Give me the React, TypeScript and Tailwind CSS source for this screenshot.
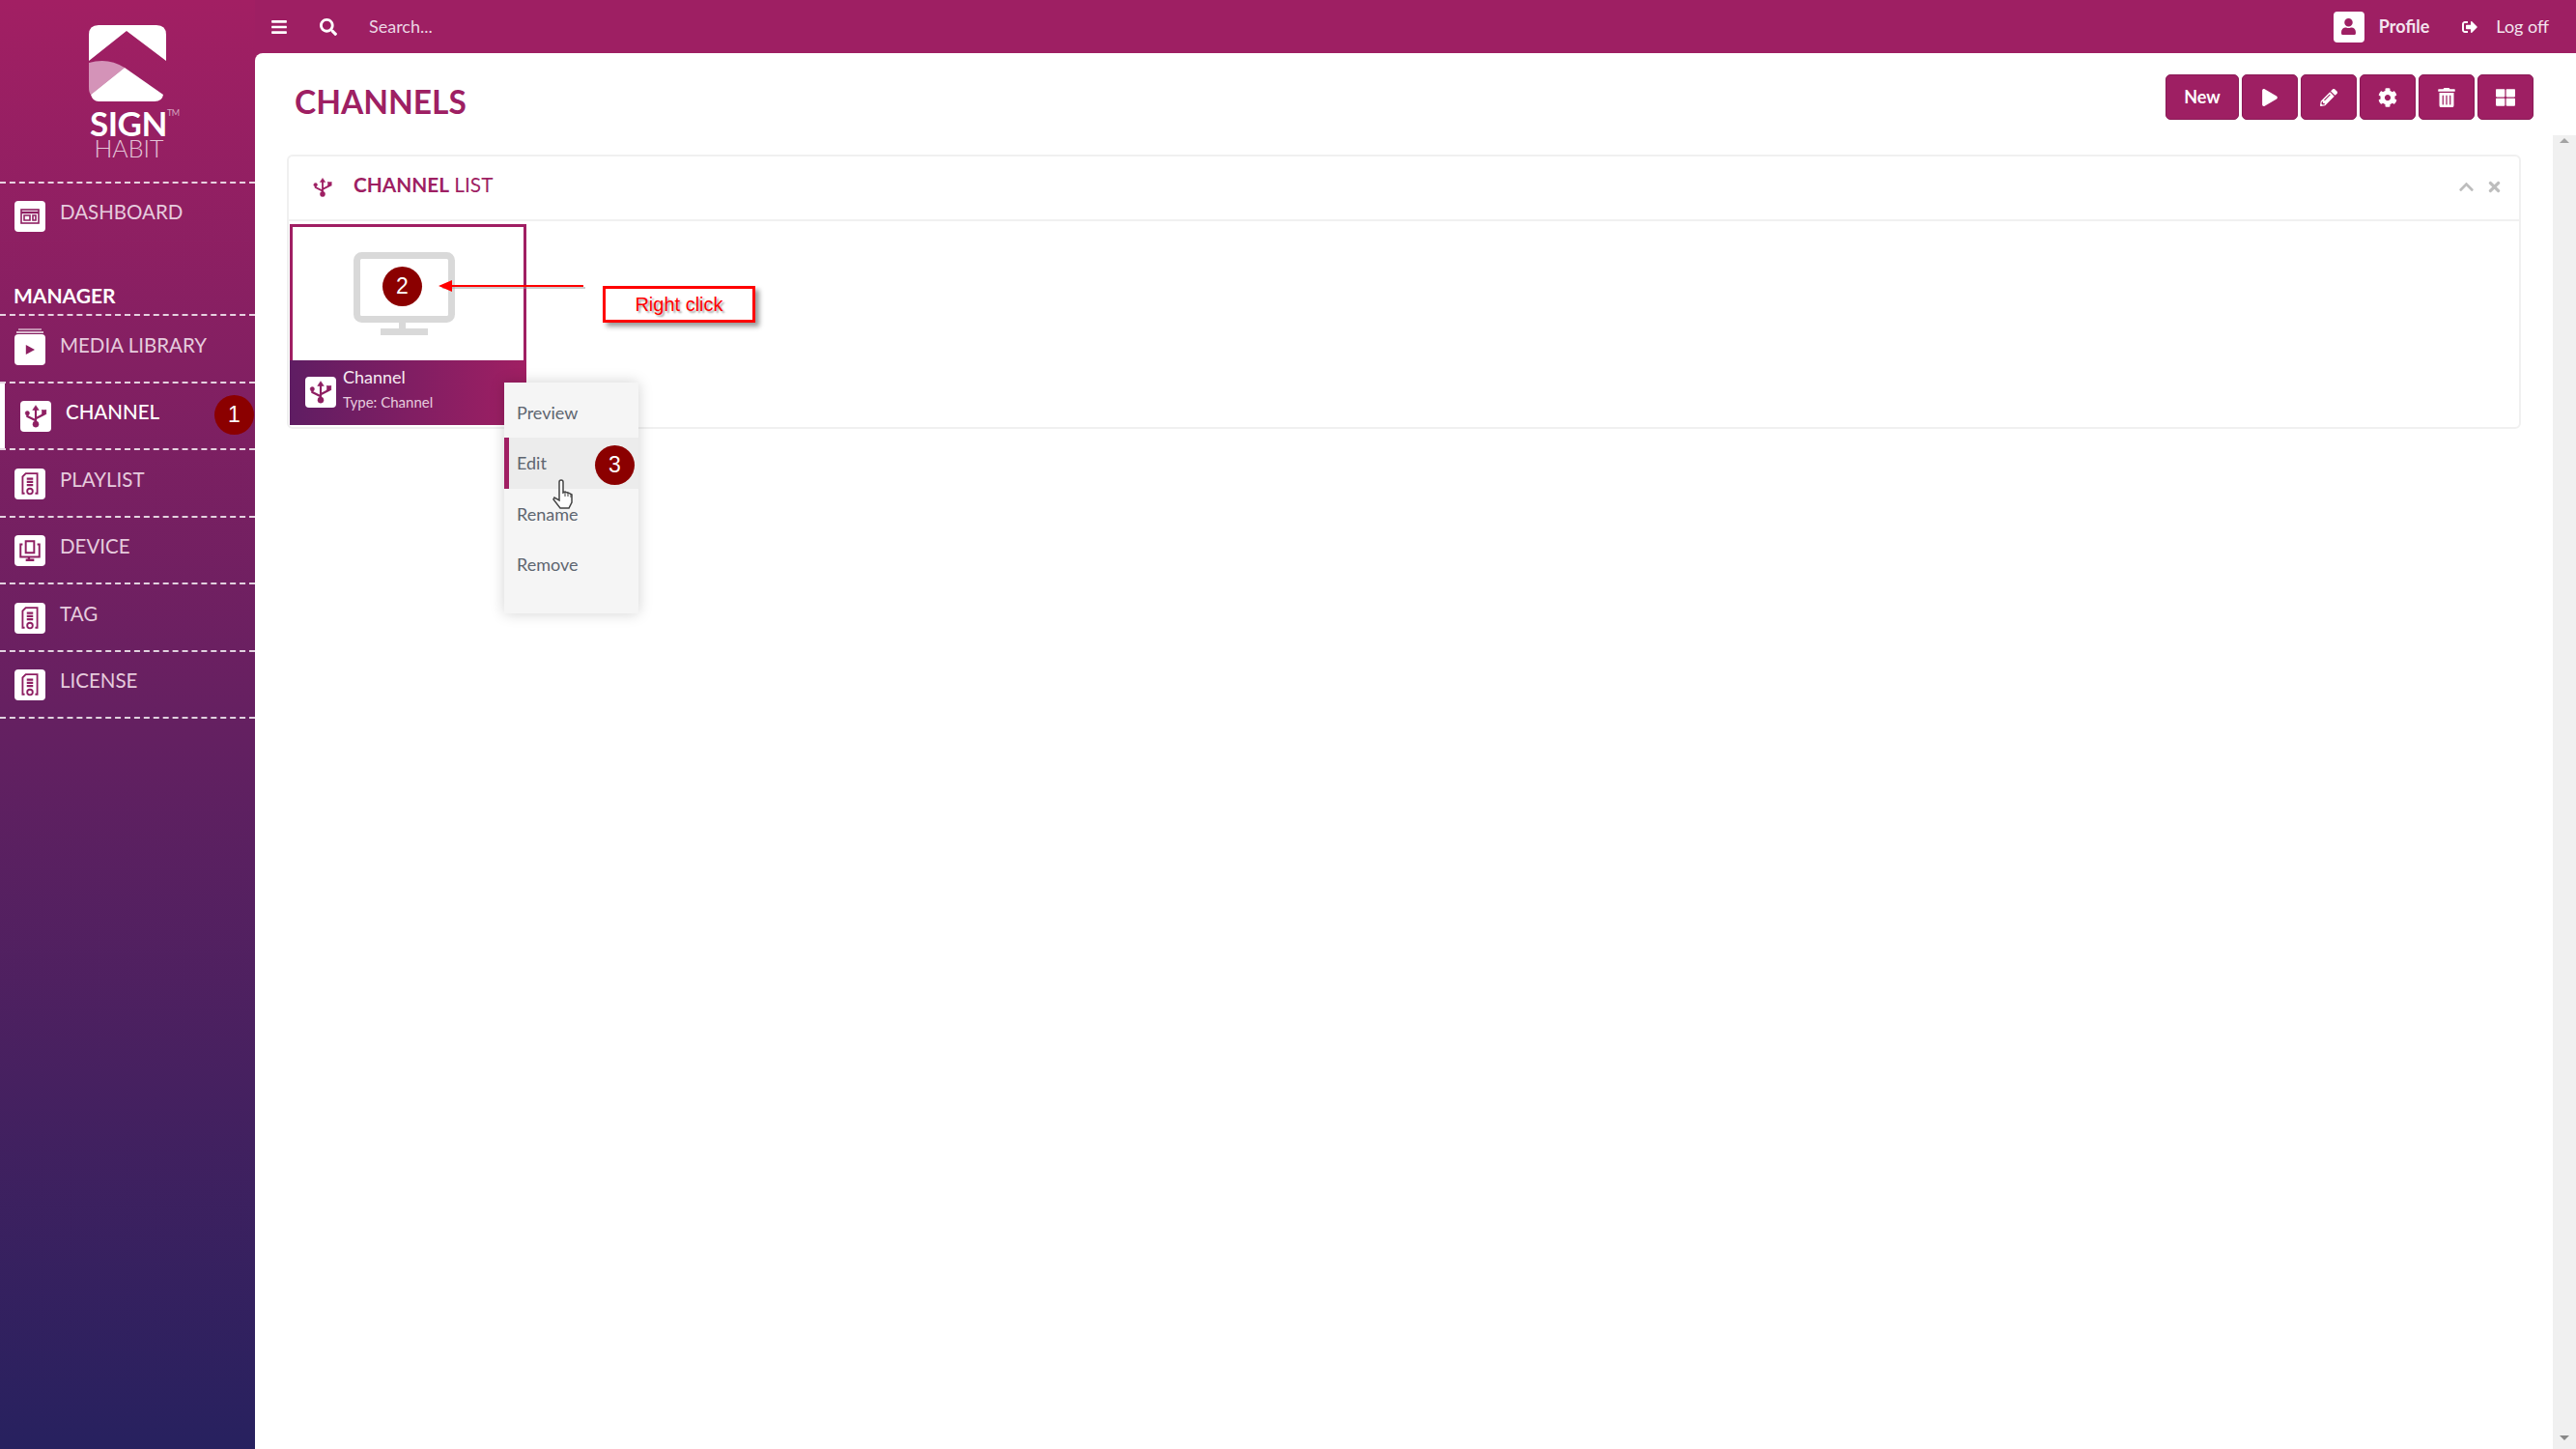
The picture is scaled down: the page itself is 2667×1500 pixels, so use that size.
import React from 'react';
import { FaBars, FaSearch, FaPlay, FaPencilAlt, FaCog, FaTrashAlt, FaThLarge, FaChevronUp, FaTimes, FaUser, FaSignOutAlt } from 'react-icons/fa';

const SheetIcon = () => (
  <svg viewBox="0 0 24 24" className="w-[26px] h-[26px]" fill="none" stroke="#8e1f62" strokeWidth="1.7">
    <path d="M7 21H5V5l3-3h11v19h-2" />
    <path d="M9 7h6M9 10h6M9 13h6" strokeWidth="2" />
    <circle cx="12" cy="19" r="2.6" />
  </svg>
);

const DashIcon = () => (
  <svg viewBox="0 0 24 24" className="w-[24px] h-[24px]" fill="none" stroke="#8e1f62" strokeWidth="1.6">
    <rect x="3" y="5" width="18" height="14" />
    <path d="M3 8h18" strokeWidth="2.4" />
    <path d="M6 11h6v5H6zM15 11h3v5h-3z" />
  </svg>
);

const MediaIcon = () => (
  <>
    <div className="absolute -top-[3px] left-[2px] right-[2px] h-[2px] bg-white/70" />
    <div className="absolute -top-[6px] left-[4px] right-[4px] h-[2px] bg-white/50" />
    <svg viewBox="0 0 24 24" className="w-[20px] h-[20px]" fill="#8e1f62">
      <path d="M7 6l11 6-11 6z" />
    </svg>
  </>
);

const DeviceIcon = () => (
  <svg viewBox="0 0 24 24" className="w-[26px] h-[26px]" fill="none" stroke="#8e1f62" strokeWidth="1.8">
    <path d="M5 6H3v12h18V6h-2" />
    <path d="M8 3h8v11H8z" />
    <path d="M11 18v3M8 21h8" strokeWidth="2.2" />
  </svg>
);

const UsbIcon = ({ className, color = '#8e1f62' }: { className: string; color?: string }) => (
  <svg viewBox="0 0 24 24" className={className} fill={color} stroke={color} strokeWidth="2">
    <path d="M12 19V5M12 16L4 12V10M12 14l8-4V8" fill="none" />
    <path d="M12 1.5l3 4.5H9z" strokeWidth="0.5" />
    <circle cx="4" cy="9" r="2" strokeWidth="0.5" />
    <rect x="18" y="6" width="4" height="4" strokeWidth="0.5" />
    <circle cx="12" cy="19.5" r="2.8" strokeWidth="0.5" />
  </svg>
);

const Logo = () => (
  <div className="flex flex-col items-center pt-[26px]">
    <svg viewBox="0 0 80 80" className="w-[80px] h-[80px]">
      <path d="M0 37V10Q0 0 10 0H70Q80 0 80 10V37L39 6Z" fill="#fff" />
      <path d="M0 39Q20 33 37 44L2 72Q0 70 0 64Z" fill="#d493b8" />
      <path d="M2 72L37 44L77 72Q76 79 68 79H10Q4 79 2 72Z" fill="#fff" />
    </svg>
    <div className="relative text-[35px] leading-[30px] font-bold text-white mt-[6px] ml-[2px] tracking-[-0.5px]">
      SIGN
      <span className="absolute left-full top-0 text-[9px] leading-[10px] font-normal text-white/60">TM</span>
    </div>
    <div className="text-[25px] leading-[22px] font-light text-[#e4c4d8] ml-[3px]">HABIT</div>
  </div>
);

const items = [
  { label: 'MEDIA LIBRARY', icon: <MediaIcon /> },
  { label: 'CHANNEL', icon: <UsbIcon className="w-[26px] h-[26px]" />, active: true },
  { label: 'PLAYLIST', icon: <SheetIcon /> },
  { label: 'DEVICE', icon: <DeviceIcon /> },
  { label: 'TAG', icon: <SheetIcon /> },
  { label: 'LICENSE', icon: <SheetIcon /> },
];

const toolButtons = [
  <FaPlay className="text-[18px]" />,
  <FaPencilAlt className="text-[18px]" />,
  <FaCog className="text-[20px]" />,
  <FaTrashAlt className="text-[20px]" />,
  <FaThLarge className="text-[20px]" />,
];

const Badge = ({ n, className }: { n: number; className: string }) => (
  <div className={`absolute w-[41px] h-[41px] rounded-full bg-[#8b0000] text-white flex items-center justify-center text-[23px] ${className}`} style={{ fontFamily: '"Liberation Sans", sans-serif' }}>
    {n}
  </div>
);

const Sidebar = () => (
  <aside className="relative w-[264px] shrink-0 bg-linear-to-b/srgb from-[#a21f63] to-[#27215f]">
    <div className="h-[190px] border-b-2 border-dashed border-white/80">
      <Logo />
    </div>
    <div className="h-[137px] border-b-2 border-dashed border-white/80 flex flex-col pl-[15px]">
      <div className="flex items-center gap-[15px] mt-[18px]">
        <div className="w-[32px] h-[32px] rounded-[4px] bg-white flex items-center justify-center"><DashIcon /></div>
        <span className="text-[20.5px] leading-[26px] -mt-[10px] text-[#e6cbdd]">DASHBOARD</span>
      </div>
      <div className="mt-auto mb-[6px] -ml-[1px] text-[21px] leading-[26px] font-bold text-white">MANAGER</div>
    </div>
    {items.map((item) => (
      <div
        key={item.label}
        className={`relative h-[69.5px] border-b-2 border-dashed border-white/80 flex items-center ${item.active ? 'pl-[21px]' : 'pl-[15px]'} gap-[15px]`}
      >
        {item.active && <div className="absolute left-0 top-0 bottom-0 w-[5px] bg-white" />}
        <div className="relative mt-[2px] w-[32px] h-[32px] rounded-[4px] bg-white flex items-center justify-center">{item.icon}</div>
        <span className={`text-[20.5px] leading-[26px] -mt-[8px] ${item.active ? 'text-white font-medium' : 'text-[#e6cbdd]'}`}>{item.label}</span>
      </div>
    ))}
    <Badge n={1} className="left-[222px] top-[409px]" />
  </aside>
);

const TopBar = () => (
  <header className="h-[55px] shrink-0 flex items-center text-white">
    <FaBars className="ml-[16px] text-[18px]" />
    <FaSearch className="ml-[33px] text-[18px]" />
    <span className="ml-[33px] text-[18px] text-[#ecd6e4]">Search...</span>
    <div className="ml-auto flex items-center">
      <div className="w-[32px] h-[32px] rounded-[4px] bg-white flex items-center justify-center">
        <FaUser className="text-[#9e1f63] text-[17px]" />
      </div>
      <span className="ml-[15px] text-[18px] font-bold text-[#f3e4ee]">Profile</span>
      <FaSignOutAlt className="ml-[34px] text-[16px]" />
      <span className="ml-[19px] mr-[28px] text-[18px] text-[#f3e4ee]">Log off</span>
    </div>
  </header>
);

const ContextMenu = () => (
  <div className="absolute left-[223px] top-[234px] w-[139px] h-[239px] bg-[#f5f5f5] shadow-[0_0_14px_rgba(0,0,0,0.18)] pt-[5px] text-[18px] text-[#5e6570]">
    <div className="h-[52px] pl-[13px] flex items-center">Preview</div>
    <div className="h-[53px] pl-[8px] flex items-center bg-[#ececec] border-l-[5px] border-[#a01f63]">Edit</div>
    <div className="h-[52px] pl-[13px] flex items-center">Rename</div>
    <div className="h-[53px] pl-[13px] flex items-center">Remove</div>
  </div>
);

const Annotation = () => (
  <>
    <Badge n={2} className="left-[97px] top-[114px]" />
    <svg className="absolute left-[153px] top-[123px] overflow-visible" width="160" height="20" viewBox="0 0 160 20">
      <path d="M6 13h148" stroke="#999" strokeWidth="2" fill="none" opacity="0.5" />
      <path d="M152 11H14" stroke="#f00" strokeWidth="2" fill="none" />
      <path d="M2 11l14-6v12z" fill="#f00" />
    </svg>
    <div
      className="absolute left-[325px] top-[134px] w-[158px] h-[38px] border-[3px] border-[#f00] bg-white text-[#f00] flex items-center justify-center text-[20px] shadow-[4px_4px_5px_rgba(0,0,0,0.4)] [text-shadow:2px_2px_2px_rgba(0,0,0,0.35)]"
      style={{ fontFamily: '"Liberation Sans", sans-serif' }}
    >
      Right click
    </div>
    <svg className="absolute left-[272px] top-[333px] z-10" width="26" height="34" viewBox="0 0 26 32" fill="#fff" stroke="#444" strokeWidth="1.5">
      <path d="M8 3a2 2 0 0 1 4 0v11l2-1 1 .5 2 .5 2 .8 2 1.2v8l-3 6H9l-7-9 1-2 5 3z" />
      <path d="M14 13v5M17 14v4M20 15v4" fill="none" strokeWidth="1" />
    </svg>
  </>
);

const Card = () => (
  <div className="w-[245px] h-[208px] ml-[1px] mt-[3px] border-[3px] border-[#a01f63] flex flex-col">
    <div className="flex-1 flex items-center justify-center">
      <svg viewBox="0 0 105 86" className="w-[105px] h-[86px] -ml-[8px]">
        <rect x="3.5" y="3.5" width="98" height="66" rx="5" fill="none" stroke="#d9d9d9" strokeWidth="7" />
        <path d="M47 72h7v8h-7zM28 79h49v7H28z" fill="#d9d9d9" />
      </svg>
    </div>
    <div className="h-[67px] -mx-[3px] -mb-[3px] bg-linear-to-r/srgb from-[#5f1d63] to-[#a01f63] flex items-center pl-[16px] text-white">
      <div className="w-[32px] h-[32px] -mt-[2px] rounded-[4px] bg-white flex items-center justify-center">
        <UsbIcon className="w-[26px] h-[26px]" />
      </div>
      <div className="ml-[7px] -mt-[2px]">
        <div className="text-[18px] leading-[22px] text-[#f6eaf2] -mt-[8px]">Channel</div>
        <div className="text-[15px] leading-[18px] mt-[6px] text-[#e6cbdd]">Type: Channel</div>
      </div>
    </div>
  </div>
);

const Panel = () => (
  <section className="relative ml-[33px] mr-[57px] h-[284px] border-2 border-[#f0f0f0] rounded-[6px] bg-white">
    <div className="h-[67px] border-b-2 border-[#f0f0f0] flex items-center pl-[24px] pr-[17px]">
      <UsbIcon className="w-[22px] h-[22px] -mt-[2px]" color="#9e1f63" />
      <h2 className="ml-[21px] -mt-[8px] text-[20.8px] text-[#9e1f63]">
        <span className="font-bold">CHANNEL</span> LIST
      </h2>
      <FaChevronUp className="ml-auto -mt-[2px] text-[#bdbdbd] text-[17px]" />
      <FaTimes className="ml-[12px] -mt-[2px] text-[#bdbdbd] text-[17px]" />
    </div>
    <Card />
    <Annotation />
    <ContextMenu />
    <Badge n={3} className="left-[317px] top-[299px]" />
  </section>
);

export default function App() {
  return (
    <div className="flex h-[1500px] w-[2667px] overflow-hidden bg-[#9e1f63]" style={{ fontFamily: 'Lato, sans-serif' }}>
      <Sidebar />
      <div className="flex-1 flex flex-col min-w-0">
        <TopBar />
        <main className="flex-1 relative bg-white rounded-tl-[8px]">
          <div className="h-[105px] flex items-start pl-[41px] pr-[44px]">
            <h1 className="mt-[26px] text-[33.5px] leading-[48px] font-bold text-[#9e1f63]">CHANNELS</h1>
            <div className="ml-auto flex gap-[3px] mt-[22px]">
              <button className="w-[76px] h-[47px] rounded-[5px] bg-[#9e1f63] border border-[#8a1a56] text-white font-bold text-[18px]">New</button>
              {toolButtons.map((icon, i) => (
                <button key={i} className="w-[58px] h-[47px] rounded-[5px] bg-[#9e1f63] border border-[#8a1a56] text-white flex items-center justify-center">
                  {icon}
                </button>
              ))}
            </div>
          </div>
          <Panel />
          <div className="absolute right-0 top-[85px] bottom-0 w-[24px] bg-[#f0f0f0] flex flex-col items-center justify-between pt-[3px] pb-[9px]">
            <div className="w-0 h-0 border-x-[5px] border-x-transparent border-b-[5px] border-b-[#a3a3a3]" />
            <div className="w-0 h-0 border-x-[5px] border-x-transparent border-t-[5px] border-t-[#888888]" />
          </div>
        </main>
      </div>
    </div>
  );
}
